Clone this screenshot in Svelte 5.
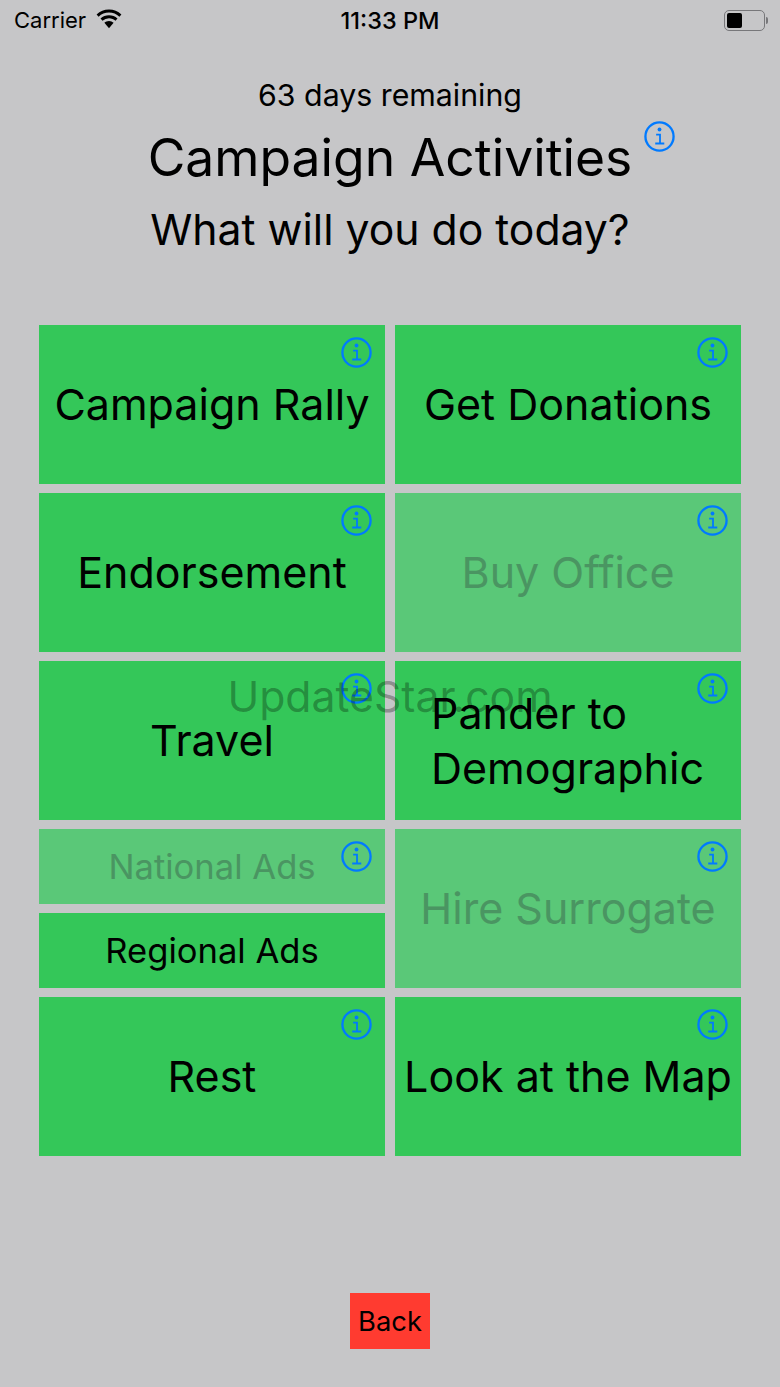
<script>
  const activities = [
    { label: 'Campaign Rally' },
    { label: 'Get Donations' },
    { label: 'Endorsement' },
    { label: 'Buy Office', disabled: true },
    { label: 'Travel' },
    { label: 'Pander to Demographic', wrap: true },
    { split: true },
    { label: 'Hire Surrogate', disabled: true },
    { label: 'Rest' },
    { label: 'Look at the Map' }
  ];
</script>

{#snippet info(cls)}
  <svg class="info {cls}" viewBox="0 0 24 24" fill="none" stroke="currentColor" aria-hidden="true">
    <circle cx="12" cy="12" r="10.9" stroke-width="1.8" />
    <circle cx="12" cy="6.6" r="1.5" fill="currentColor" stroke="none" />
    <path d="M9.4 10.6h3v6.800M8.700 17.400h7" stroke-width="1.4" />
  </svg>
{/snippet}

<main class="screen">
  <header class="status">
    <div class="status-left">
      <span>Carrier</span>
      <svg class="wifi" viewBox="0 0 28 20" aria-hidden="true">
        <path d="M14 3.500c4 0 7.600 1.600 10.400 4.200l2-2.200A18 18 0 0 0 14 .6 18 18 0 0 0 1.600 5.500l2 2.200A15 15 0 0 1 14 3.500z" />
        <path d="M14 9.200c2.500 0 4.800 1 6.500 2.600l2-2.200A12.400 12.400 0 0 0 14 6.300a12.400 12.400 0 0 0-8.500 3.300l2 2.200A9.500 9.500 0 0 1 14 9.200z" />
        <path d="M14 12c-1.800 0-3.400.7-4.600 1.800L14 19.200l4.600-5.400A6.800 6.800 0 0 0 14 12z" />
      </svg>
    </div>
    <span class="clock">11:33 PM</span>
    <div class="battery" aria-hidden="true">
      <div class="battery-body"><div class="battery-level"></div></div>
      <div class="battery-cap"></div>
    </div>
  </header>

  <section class="heading">
    <p class="days">63 days remaining</p>
    <div class="title-row">
      <h1>Campaign Activities</h1>
      {@render info('title-info')}
    </div>
    <h2>What will you do today?</h2>
  </section>

  <section class="grid">
    {#each activities as item}
      {#if item.split}
        <div class="split">
          <button class="tile small disabled">
            National Ads
            {@render info('tile-info')}
          </button>
          <button class="tile small">Regional Ads</button>
        </div>
      {:else}
        <button class="tile" class:disabled={item.disabled}>
          <span class:wrap={item.wrap}>{item.label}</span>
          {@render info('tile-info')}
        </button>
      {/if}
    {/each}
  </section>

  <div class="footer">
    <button class="back">Back</button>
  </div>

  <div class="watermark">UpdateStar.com</div>
</main>

<style>
  :global(body) {
    margin: 0;
    background: #c6c6c8;
  }

  .screen {
    position: relative;
    width: 780px;
    height: 1387px;
    overflow: hidden;
    background: #c6c6c8;
    color: #000;
    font-family: Inter, "Liberation Sans", sans-serif;
  }

  .status {
    display: flex;
    align-items: center;
    justify-content: space-between;
    height: 40px;
    padding: 0 12px 0 14px;
  }

  .status-left {
    display: flex;
    align-items: center;
    gap: 9px;
    width: 200px;
    font-size: 22px;
  }

  .wifi {
    width: 28px;
    height: 20px;
    margin-top: -3px;
    fill: #000;
  }

  .clock {
    font-weight: 500;
    font-size: 23.500px;
  }

  .battery {
    display: flex;
    align-items: center;
    justify-content: flex-end;
    width: 202px;
  }

  .battery-body {
    box-sizing: border-box;
    width: 41px;
    height: 21px;
    padding: 2px;
    border: 1.500px solid #77777a;
    border-radius: 5px;
  }

  .battery-level {
    width: 15px;
    height: 100%;
    background: #000;
    border-radius: 2px;
  }

  .battery-cap {
    width: 2px;
    height: 7px;
    margin-left: 1px;
    background: #77777a;
    border-radius: 0 2px 2px 0;
  }

  .heading {
    display: flex;
    flex-direction: column;
    align-items: center;
    padding-top: 35px;
  }

  .days {
    margin: 0;
    font-size: 30.300px;
    line-height: 40px;
  }

  .title-row {
    position: relative;
    margin-top: 11px;
  }

  h1 {
    margin: 0;
    font-size: 51.600px;
    font-weight: 400;
    line-height: 62px;
  }

  .title-info {
    position: absolute;
    left: 496px;
    top: -5px;
    color: #007aff;
  }

  h2 {
    margin: 15px 0 0;
    font-size: 42.700px;
    font-weight: 400;
    line-height: 54px;
  }

  .grid {
    display: grid;
    grid-template-columns: 346px 346px;
    grid-auto-rows: 159px;
    gap: 9px 10px;
    justify-content: start;
    margin: 68px 0 0 39px;
  }

  .tile {
    position: relative;
    display: flex;
    align-items: center;
    justify-content: center;
    padding: 0;
    border: 0;
    background: #34c759;
    color: #000;
    font-family: inherit;
    font-size: 43px;
    line-height: 55px;
  }

  .tile.disabled {
    background: #5ac878;
    color: #4a9562;
  }

  .wrap {
    width: 274px;
    text-align: left;
  }

  .split {
    display: flex;
    flex-direction: column;
    gap: 9px;
  }

  .tile.small {
    flex: 1;
    font-size: 34.600px;
  }

  .info {
    width: 31px;
    height: 31px;
  }

  .tile-info {
    position: absolute;
    top: 12px;
    right: 13px;
    color: #007aff;
  }

  .footer {
    display: flex;
    justify-content: center;
    margin-top: 137px;
  }

  .back {
    width: 80px;
    height: 56px;
    padding: 0;
    border: 0;
    background: #ff3b30;
    color: #000;
    font-family: inherit;
    font-size: 27.300px;
  }

  .watermark {
    position: absolute;
    left: 0;
    right: 0;
    top: 669px;
    text-align: center;
    font-size: 42.700px;
    line-height: 55px;
    color: rgba(0, 0, 0, 0.3);
    pointer-events: none;
  }
</style>
